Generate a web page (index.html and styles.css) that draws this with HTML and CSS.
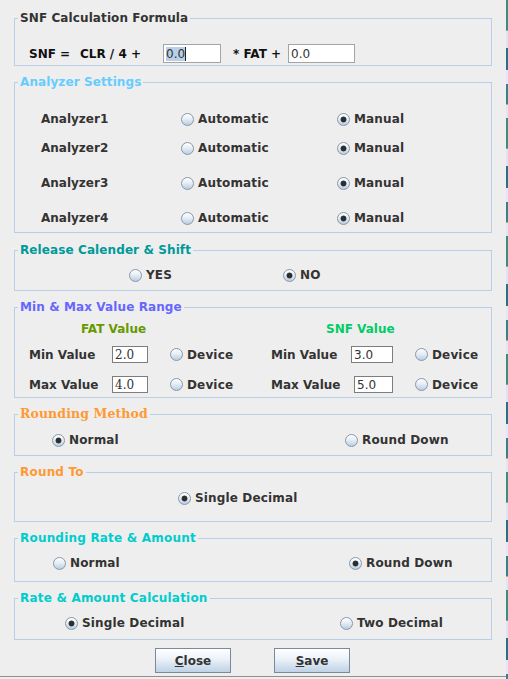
FILE: index.html
```html
<!DOCTYPE html>
<html>
<head>
<meta charset="utf-8">
<title>Settings</title>
<link rel="stylesheet" href="styles.css">
</head>
<body>
<div class="screen">
  <div class="dialog">
    <fieldset class="box b1">
      <legend class="t-dark">SNF Calculation Formula</legend>
      <div class="row formula">
        <span class="f-snf">SNF =</span>
        <span class="f-clr">CLR / 4 +</span>
        <span class="field w58"><span class="sel">0.0</span><span class="caret"></span></span>
        <span class="f-fat">* FAT +</span>
        <span class="field w67">0.0</span>
      </div>
    </fieldset>

    <fieldset class="box b2">
      <legend class="t-sky">Analyzer Settings</legend>
      <div class="row an r1">
        <span class="an-label">Analyzer1</span>
        <span class="opt an-auto"><span class="radio"></span>Automatic</span>
        <span class="opt"><span class="radio on"></span>Manual</span>
      </div>
      <div class="row an r2">
        <span class="an-label">Analyzer2</span>
        <span class="opt an-auto"><span class="radio"></span>Automatic</span>
        <span class="opt"><span class="radio on"></span>Manual</span>
      </div>
      <div class="row an r3">
        <span class="an-label">Analyzer3</span>
        <span class="opt an-auto"><span class="radio"></span>Automatic</span>
        <span class="opt"><span class="radio on"></span>Manual</span>
      </div>
      <div class="row an r3">
        <span class="an-label">Analyzer4</span>
        <span class="opt an-auto"><span class="radio"></span>Automatic</span>
        <span class="opt"><span class="radio on"></span>Manual</span>
      </div>
    </fieldset>

    <fieldset class="box b3">
      <legend class="t-teal">Release Calender &amp; Shift</legend>
      <div class="row rel">
        <span class="opt rel-yes"><span class="radio"></span>YES</span>
        <span class="opt"><span class="radio on"></span>NO</span>
      </div>
    </fieldset>

    <fieldset class="box b4">
      <legend class="t-violet">Min &amp; Max Value Range</legend>
      <div class="row mm-head">
        <span class="h-fat">FAT Value</span>
        <span class="h-snf">SNF Value</span>
      </div>
      <div class="row mm mm-min">
        <span class="mm-l1">Min Value</span>
        <span class="field small serif w36">2.0</span>
        <span class="opt mm-dev"><span class="radio"></span>Device</span>
        <span class="mm-l2">Min Value</span>
        <span class="field small w42">3.0</span>
        <span class="opt mm-dev2"><span class="radio"></span>Device</span>
      </div>
      <div class="row mm mm-max">
        <span class="mm-l1">Max Value</span>
        <span class="field small serif w36">4.0</span>
        <span class="opt mm-dev"><span class="radio"></span>Device</span>
        <span class="mm-l2 wide">Max Value</span>
        <span class="field small w39">5.0</span>
        <span class="opt mm-dev2"><span class="radio"></span>Device</span>
      </div>
    </fieldset>

    <fieldset class="box b5">
      <legend class="t-orange serif-title">Rounding Method</legend>
      <div class="row rm">
        <span class="opt rm-a"><span class="radio on"></span>Normal</span>
        <span class="opt"><span class="radio"></span>Round Down</span>
      </div>
    </fieldset>

    <fieldset class="box b6">
      <legend class="t-orange wide-title">Round To</legend>
      <div class="row rt">
        <span class="opt"><span class="radio on"></span>Single Decimal</span>
      </div>
    </fieldset>

    <fieldset class="box b7">
      <legend class="t-cyan wide-title">Rounding Rate &amp; Amount</legend>
      <div class="row rr">
        <span class="opt rr-a"><span class="radio"></span>Normal</span>
        <span class="opt"><span class="radio on"></span>Round Down</span>
      </div>
    </fieldset>

    <fieldset class="box b8">
      <legend class="t-cyan wide-title">Rate &amp; Amount Calculation</legend>
      <div class="row rc">
        <span class="opt rc-a"><span class="radio on"></span>Single Decimal</span>
        <span class="opt"><span class="radio"></span>Two Decimal</span>
      </div>
    </fieldset>

    <div class="buttons">
      <button class="btn" type="button"><span class="u">C</span>lose</button>
      <button class="btn" type="button"><span class="u">S</span>ave</button>
    </div>
  </div>
  <div class="strip"></div>
</div>
</body>
</html>
```

FILE: styles.css
```css
* { box-sizing: border-box; }
html, body { margin: 0; padding: 0; }
body {
  width: 508px;
  height: 679px;
  overflow: hidden;
  background: #eeeeee;
  font-family: "DejaVu Sans", "Liberation Sans", sans-serif;
  font-size: 12px;
  font-weight: bold;
  color: #333333;
}
.screen { display: flex; height: 679px; }
.dialog {
  width: 506px;
  height: 677px;
  border-bottom: 1px solid #8e8e8e;
  padding: 11px 0 0 14px;
  display: flex;
  flex-direction: column;
}
.strip {
  width: 2px;
  height: 679px;
  background: repeating-linear-gradient(180deg,
    #3e8a7c 0 30px, #9a8fc8 30px 31px, #e2e2f6 31px 48px,
    #2f6f86 48px 70px, #e6e6f8 70px 84px, #3b7f8a 84px 104px,
    #d7a050 104px 105px, #e4e4f6 105px 118px);
}
.box {
  margin: 0;
  padding: 0;
  min-width: 0;
  width: 478px;
  border: 1px solid #b8cfe5;
}
.box + .box { margin-top: 9px; }
.dialog .b3 { margin-top: 10px; }
legend {
  padding: 0 2px;
  margin-left: 3px;
  line-height: 14px;
  font-size: 12px;
  font-weight: bold;
  letter-spacing: 0.1px;
}
.t-dark { color: #333333; }
.t-sky { color: #66ccff; }
.t-teal { color: #009999; }
.t-violet { color: #6666ff; }
.t-orange { color: #ff9933; }
.t-cyan { color: #00cccc; }
.serif-title {
  font-family: "DejaVu Serif", "Liberation Serif", serif;
  font-size: 12.5px;
}
legend.wide-title { letter-spacing: 0.2px; }

.row {
  display: flex;
  align-items: center;
  height: 20px;
  line-height: 14px;
  white-space: nowrap;
}
.opt { display: flex; align-items: center; letter-spacing: 0.15px; }
.radio {
  flex: none;
  width: 13px;
  height: 13px;
  margin-right: 4px;
  border-radius: 50%;
  border: 1px solid #8898aa;
  background: linear-gradient(180deg, #ffffff 0%, #e6eef6 45%, #b9cde2 100%);
}
.radio.on {
  background:
    radial-gradient(circle, #2e2e2e 0 2.6px, rgba(46,46,46,0) 3.3px),
    linear-gradient(180deg, #ffffff 0%, #e6eef6 45%, #b9cde2 100%);
}

.field {
  flex: none;
  display: flex;
  align-items: center;
  height: 19px;
  padding-left: 2px;
  border: 1px solid #a4a4a4;
  background: #ffffff;
  font-weight: normal;
  color: #333333;
}
.field.small { height: 17px; border-color: #7d7d7d; }
.field.serif { font-family: "DejaVu Serif", "Liberation Serif", serif; }
.sel { background: #b8cfe5; }
.caret { width: 1px; height: 14px; background: #222; }
.w58 { width: 58px; }
.w67 { width: 67px; }
.w36 { width: 36px; }
.w42 { width: 42px; }
.w39 { width: 39px; }

/* section 1 */
.b1 { padding: 19px 0 2px 0; }
.formula { height: 19px; padding-left: 14px; color: #111111; }
.f-snf { width: 51px; }
.f-clr { width: 83px; }
.f-fat { width: 55px; margin-left: 12px; }

/* section 2 */
.b2 { padding: 20px 0 4px 0; }
.an { padding-left: 26px; }
.an-label { width: 140px; }
.an-auto { width: 156px; }
.r2 { margin-top: 9px; }
.r3 { margin-top: 15px; }

/* section 3 */
.b3 { padding: 8px 0 5px 0; }
.rel { padding-left: 114px; }
.rel-yes { width: 154px; }

/* section 4 */
.b4 { padding: 7px 0 4px 0; }
.mm-head { height: 16px; padding-left: 14px; }
.h-fat { margin-left: 52px; width: 245px; color: #669900; }
.h-snf { color: #00cc66; }
.mm { height: 17px; padding-left: 14px; }
.mm-min { margin-top: 9px; }
.mm-max { margin-top: 13px; }
.mm-l1 { width: 83px; }
.mm-dev { width: 101px; margin-left: 22px; }
.mm-l2 { width: 80px; }
.mm-l2.wide { width: 83px; }
.mm-dev2 { margin-left: 22px; }

/* section 5 */
.b5 { padding: 9px 0 5px 0; }
.rm { padding-left: 37px; }
.rm-a { width: 293px; }

/* section 6 */
.b6 { padding: 9px 0 13px 0; }
.rt { padding-left: 163px; }

/* section 7 */
.b7 { padding: 8px 0 8px 0; }
.rr { padding-left: 38px; }
.rr-a { width: 296px; }

/* section 8 */
.b8 { padding: 8px 0 6px 0; }
.rc { padding-left: 50px; }
.rc-a { width: 275px; }

/* buttons */
.buttons {
  display: flex;
  gap: 43px;
  margin-top: 8px;
  padding-left: 141px;
}
.btn {
  width: 76px;
  height: 25px;
  margin: 0;
  padding: 0;
  display: flex;
  align-items: center;
  justify-content: center;
  border: 1px solid #7a8a99;
  border-radius: 0;
  background: linear-gradient(180deg, #ffffff 0%, #eef3f9 40%, #bfd2e6 100%);
  font-family: "DejaVu Sans", "Liberation Sans", sans-serif;
  font-size: 12px;
  font-weight: bold;
  color: #333333;
}
.u { text-decoration: underline; }
```
